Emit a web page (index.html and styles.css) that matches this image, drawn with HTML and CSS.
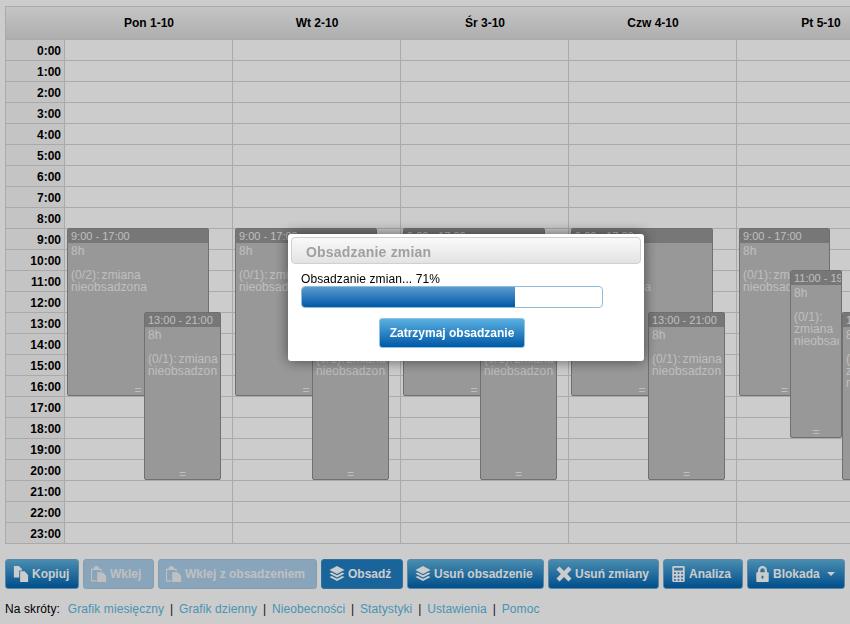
FILE: index.html
```html
<!DOCTYPE html>
<html lang="pl">
<head>
<meta charset="utf-8">
<title>Grafik</title>
<link rel="stylesheet" href="styles.css">
</head>
<body>
<svg class="defs" width="0" height="0" aria-hidden="true">
  <symbol id="i-copy" viewBox="0 0 18 18"><path d="M1 0h5.500L10 3.500V5H7v8H1z"/><path d="M8 6h5l4 4v8H8z"/></symbol>
  <symbol id="i-paste" viewBox="0 0 18 18"><path fill-rule="evenodd" d="M0 3h3V1.500h1.500V0h3v1.500H9V3h3v3h-1.200V4.500H1.200V16H6v1.500H0z"/><path d="M7 7h6l4 4v7H7z"/></symbol>
  <symbol id="i-layers" viewBox="0 0 18 18"><path d="M9 0l8.500 4.500L9 9 .5 4.500z"/><path d="M3 7.200L9 10.400l6-3.200 2.500 1.300L9 13 .5 8.500z"/><path d="M3 11.200L9 14.400l6-3.200 2.500 1.300L9 17 .5 12.500z"/></symbol>
  <symbol id="i-x" viewBox="0 0 18 18"><path d="M4 .5L9 5.500 14 .5l3.500 3.500-5 5 5 5-3.500 3.500-5-5-5 5L.5 14l5-5-5-5z"/></symbol>
  <symbol id="i-calc" viewBox="0 0 14 18"><path fill-rule="evenodd" d="M1.500 0h11A1.500 1.500 0 0 1 14 1.500v15a1.500 1.500 0 0 1-1.500 1.500h-11A1.500 1.500 0 0 1 0 16.500v-15A1.500 1.500 0 0 1 1.500 0zM2 2v3h10V2zM2 7v2h2V7zm4 0v2h2V7zm4 0v2h2V7zM2 11v2h2v-2zm4 0v2h2v-2zm4 0v2h2v-2zM2 15v1.500h2V15zm4 0v1.500h2V15zm4 0v1.500h2V15z"/></symbol>
  <symbol id="i-lock" viewBox="0 0 14 18"><path fill-rule="evenodd" d="M2 7V5a5 5 0 0 1 10 0v2h1a1 1 0 0 1 1 1v9a1 1 0 0 1-1 1H1a1 1 0 0 1-1-1V8a1 1 0 0 1 1-1zm2.500 0h5V5a2.500 2.500 0 0 0-5 0zM6 11v3h2v-3z"/></symbol>
</svg>

<main class="page">
  <section class="calendar">
    <div class="corner"></div>
    <div class="day-head">Pon 1-10</div>
    <div class="day-head">Wt 2-10</div>
    <div class="day-head">Śr 3-10</div>
    <div class="day-head">Czw 4-10</div>
    <div class="day-head">Pt 5-10</div>

    <div class="hours">
      <div class="hour">0:00</div><div class="hour">1:00</div><div class="hour">2:00</div><div class="hour">3:00</div>
      <div class="hour">4:00</div><div class="hour">5:00</div><div class="hour">6:00</div><div class="hour">7:00</div>
      <div class="hour">8:00</div><div class="hour">9:00</div><div class="hour">10:00</div><div class="hour">11:00</div>
      <div class="hour">12:00</div><div class="hour">13:00</div><div class="hour">14:00</div><div class="hour">15:00</div>
      <div class="hour">16:00</div><div class="hour">17:00</div><div class="hour">18:00</div><div class="hour">19:00</div>
      <div class="hour">20:00</div><div class="hour">21:00</div><div class="hour">22:00</div><div class="hour">23:00</div>
    </div>

    <div class="day">
      <article class="shift early wide">
        <header>9:00 - 17:00</header>
        <p>8h<br><br>(0/2): zmiana nieobsadzona</p><span class="grip">=</span>
      </article>
      <article class="shift late">
        <header>13:00 - 21:00</header>
        <p>8h<br><br>(0/1): zmiana nieobsadzona</p><span class="grip">=</span>
      </article>
    </div>
    <div class="day">
      <article class="shift early wide">
        <header>9:00 - 17:00</header>
        <p>8h<br><br>(0/1): zmiana nieobsadzona</p><span class="grip">=</span>
      </article>
      <article class="shift late">
        <header>13:00 - 21:00</header>
        <p>8h<br><br>(0/1): zmiana nieobsadzona</p><span class="grip">=</span>
      </article>
    </div>
    <div class="day">
      <article class="shift early wide">
        <header>9:00 - 17:00</header>
        <p>8h<br><br>(0/1): zmiana nieobsadzona</p><span class="grip">=</span>
      </article>
      <article class="shift late">
        <header>13:00 - 21:00</header>
        <p>8h<br><br>(0/1): zmiana nieobsadzona</p><span class="grip">=</span>
      </article>
    </div>
    <div class="day">
      <article class="shift early wide">
        <header>9:00 - 17:00</header>
        <p>8h<br><br>(0/1): zmiana nieobsadzona</p><span class="grip">=</span>
      </article>
      <article class="shift late">
        <header>13:00 - 21:00</header>
        <p>8h<br><br>(0/1): zmiana nieobsadzona</p><span class="grip">=</span>
      </article>
    </div>
    <div class="day">
      <article class="shift early narrow">
        <header>9:00 - 17:00</header>
        <p>8h<br><br>(0/1): zmiana nieobsadzona</p><span class="grip">=</span>
      </article>
      <article class="shift mid">
        <header>11:00 - 19:00</header>
        <p>8h<br><br>(0/1): zmiana nieobsadzona</p><span class="grip">=</span>
      </article>
      <article class="shift last">
        <header>13:00 - 21:00</header>
        <p>8h<br><br>(0/1): zmiana nieobsadzona</p><span class="grip">=</span>
      </article>
    </div>
  </section>

  <nav class="toolbar">
    <button class="btn"><svg class="ico"><use href="#i-copy"/></svg>Kopiuj</button>
    <button class="btn off"><svg class="ico"><use href="#i-paste"/></svg>Wklej</button>
    <button class="btn off"><svg class="ico"><use href="#i-paste"/></svg>Wklej z obsadzeniem</button>
    <button class="btn flat"><svg class="ico"><use href="#i-layers"/></svg>Obsadź</button>
    <button class="btn"><svg class="ico"><use href="#i-layers"/></svg>Usuń obsadzenie</button>
    <button class="btn"><svg class="ico"><use href="#i-x"/></svg>Usuń zmiany</button>
    <button class="btn"><svg class="ico tall"><use href="#i-calc"/></svg>Analiza</button>
    <button class="btn"><svg class="ico tall"><use href="#i-lock"/></svg>Blokada<span class="caret"></span></button>
  </nav>

  <footer class="shortcuts">
    <span class="lead">Na skróty:</span>
    <a href="#">Grafik miesięczny</a><span class="sep">|</span>
    <a href="#">Grafik dzienny</a><span class="sep">|</span>
    <a href="#">Nieobecności</a><span class="sep">|</span>
    <a href="#">Statystyki</a><span class="sep">|</span>
    <a href="#">Ustawienia</a><span class="sep">|</span>
    <a href="#">Pomoc</a>
  </footer>
</main>

<div class="overlay"></div>
<div class="dialog" role="dialog">
  <h2 class="dialog-title">Obsadzanie zmian</h2>
  <div class="dialog-body">
    <div class="progress-label">Obsadzanie zmian... 71%</div>
    <div class="progress"><div class="progress-fill" style="width:71%"></div></div>
    <div class="dialog-actions"><button class="stop">Zatrzymaj obsadzanie</button></div>
  </div>
</div>
</body>
</html>
```

FILE: styles.css
```css
* { box-sizing: border-box; }
html, body { margin: 0; height: 100%; }
body {
  width: 850px;
  height: 624px;
  overflow: hidden;
  background: #fff;
  color: #000;
  font: 12px/14px "Liberation Sans", Arial, sans-serif;
}
.defs { position: absolute; }
.page { width: 850px; padding: 6px 0 0 5px; overflow: hidden; }

.calendar {
  display: grid;
  grid-template-columns: 59px repeat(5, 168px);
  grid-template-rows: 33px 504px;
  width: 900px;
  border-top: 1px solid #d5d5d5;
  border-left: 1px solid #d5d5d5;
}
.corner, .day-head {
  background: linear-gradient(#f6f6f6, #dadada);
  border-bottom: 1px solid #d5d5d5;
}
.day-head {
  font-weight: 700;
  line-height: 33px;
  text-align: center;
}
.hours { background: #f6f6f6; border-right: 1px solid #d5d5d5; }
.hour {
  height: 21px;
  border-bottom: 1px solid #d5d5d5;
  padding-right: 3px;
  font-weight: 700;
  line-height: 22px;
  text-align: right;
}
.day {
  position: relative;
  border-right: 1px solid #d5d5d5;
  background: repeating-linear-gradient(to bottom, #ffffff 0 20px, #d5d5d5 20px 21px);
}

.shift {
  position: absolute;
  height: 168px;
  background: #bfbfbf;
  border: 1px solid #8c8c8c;
  border-radius: 2px;
  color: #eee;
  font-size: 12px;
  line-height: 12px;
  letter-spacing: .1px;
  word-spacing: -1.5px;
  overflow: hidden;
}
.shift header {
  height: 15px;
  margin-top: -1px;
  padding: 1px 3px 0;
  background: #959595;
  font-size: 11px;
  line-height: 14px;
  letter-spacing: 0;
  word-spacing: 0;
  white-space: nowrap;
  overflow: hidden;
}
.shift p {
  margin: 2px 2px 0 3px;
  height: 140px;
  overflow: hidden;
}
.grip {
  position: absolute;
  left: 0;
  right: 0;
  bottom: 0;
  font-size: 12px;
  line-height: 10px;
  letter-spacing: 0;
  text-align: center;
}
.early { top: 188px; left: 2px; }
.wide { width: 142px; }
.narrow { width: 91px; }
.late { top: 272px; left: 79px; width: 77px; z-index: 1; }
.mid { top: 230px; left: 53px; width: 52px; z-index: 1; }
.last { top: 272px; left: 105px; width: 52px; z-index: 2; }

.toolbar {
  display: grid;
  grid-template-columns: 74px 71px 159px 82px 137px 111px 80px 98px;
  gap: 4px;
  margin-top: 15px;
}
.btn {
  display: flex;
  align-items: center;
  gap: 3px;
  height: 30px;
  padding: 0 9px 0 7px;
  border: 1px solid #72abcf;
  border-radius: 3px;
  background: linear-gradient(#5cb0dc, #0062af);
  color: #fff;
  font: 700 12px/14px "Liberation Sans", Arial, sans-serif;
  white-space: nowrap;
}
.btn.off { background: #accfeb; border-color: #a5c5dd; color: #f0f0f0; }
.btn.flat { background: #207ec2; border-color: #3d8cc0; }
.ico { width: 16px; height: 16px; fill: currentColor; flex: none; }
.ico.tall { width: 13px; margin: 0 1px 0 1px; }
.caret {
  width: 0;
  height: 0;
  margin-left: auto;
  border: 4px solid transparent;
  border-top: 4px solid #fff;
  border-bottom: 0;
}

.shortcuts { display: flex; align-items: center; gap: 5.8px; margin-top: 13px; height: 14px; letter-spacing: .1px; }
.lead { margin-right: 2px; }
.shortcuts a { color: #5cbae2; text-decoration: none; }
.sep { color: #222; }

.overlay { position: fixed; inset: 0; z-index: 10; background: rgba(0, 0, 0, .2); }
.dialog {
  position: fixed;
  top: 234px;
  left: 288px;
  z-index: 20;
  width: 356px;
  height: 127px;
  padding: 3px;
  background: #fff;
  border-radius: 3px;
  box-shadow: 0 0 14px rgba(0, 0, 0, .55);
}
.dialog-title {
  margin: 0;
  height: 27px;
  padding-left: 14px;
  background: linear-gradient(#f9f9f9, #e3e3e3);
  border: 1px solid #d0d0d0;
  border-radius: 4px;
  color: #a0a0a0;
  font-size: 14px;
  font-weight: 700;
  line-height: 29px;
  letter-spacing: .2px;
}
.dialog-body { padding: 9px 10px 0; }
.progress-label { line-height: 13px; letter-spacing: .1px; }
.progress {
  width: 302px;
  height: 22px;
  border: 1px solid #8fbcd9;
  border-radius: 4px;
  overflow: hidden;
}
.progress-fill { height: 100%; background: linear-gradient(#5a9bcf, #0058a8); }
.dialog-actions { display: flex; justify-content: center; width: 302px; margin-top: 10px; }
.stop {
  width: 146px;
  height: 30px;
  padding: 0;
  border: 1px solid #8cc4e2;
  border-radius: 3px;
  background: linear-gradient(#5ab0e0, #0058a8);
  color: #fff;
  font: 700 12px/14px "Liberation Sans", Arial, sans-serif;
}
```
